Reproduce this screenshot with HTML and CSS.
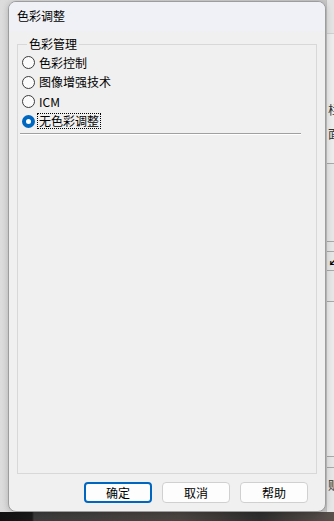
FILE: index.html
```html
<!DOCTYPE html>
<html>
<head>
  <title>色彩调整</title>
  <link rel="stylesheet" href="styles.css">
</head>
<body>

<div class="desk">
  <div class="backwin">
    <div class="bw-head"></div>
    <div class="bw-panel">
      <div class="bw-text bw-t1">栏</div>
      <div class="bw-text">面</div>
    </div>
    <div class="bw-row bw-r1"></div>
    <div class="bw-row bw-r2"></div>
    <div class="bw-row bw-r3"><span class="bw-icon">&#x2199;</span></div>
    <div class="bw-row bw-r4"></div>
    <div class="bw-row bw-r5"></div>
    <div class="bw-row bw-r6"></div>
    <div class="bw-row bw-r7"><span class="bw-text">贩</span></div>
  </div>

  <div class="photo"></div>

  <div class="dialog">
    <div class="titlebar">色彩调整</div>

    <div class="content">
      <fieldset class="group">
        <legend>色彩管理</legend>

        <div class="radio"><span class="dot"></span><span class="label">色彩控制</span></div>
        <div class="radio"><span class="dot"></span><span class="label">图像增强技术</span></div>
        <div class="radio"><span class="dot"></span><span class="label">ICM</span></div>
        <div class="radio checked"><span class="dot"></span><span class="label focus">无色彩调整</span></div>

        <div class="sep"></div>
      </fieldset>

      <div class="buttons">
        <button class="btn default">确定</button>
        <button class="btn">取消</button>
        <button class="btn">帮助</button>
      </div>
    </div>
  </div>
</div>

</body>
</html>
```

FILE: styles.css
```css
body {
  margin: 0;
  font-family: "Noto Sans CJK SC", "Liberation Sans", sans-serif;
  font-size: 12px;
  color: #000;
}

.desk {
  position: relative;
  width: 334px;
  height: 521px;
  overflow: hidden;
  background: linear-gradient(to right, #dcdcdc, #c9c9c9);
}

/* window behind, on the right */
.backwin {
  position: absolute;
  left: 326px;
  top: 0;
  width: 60px;
  height: 513px;
  background: #ebebeb;
  border-left: 1px solid #c4c4c4;
  display: flex;
  flex-direction: column;
}

.bw-head {
  height: 33px;
  background: #e3e3e3;
  border-bottom: 1px solid #cfcfcf;
}

.bw-panel {
  height: 130px;
  padding-top: 68px;
  box-sizing: border-box;
  border-bottom: 1px solid #a8a8a8;
  background: #ececec;
}

.bw-text {
  color: #333;
  line-height: 16px;
  padding-left: 1px;
}

.bw-t1 {
  margin-bottom: 8px;
}

.bw-row {
  border-bottom: 1px solid #a8a8a8;
  background: #e6e6e6;
}

.bw-r1 { height: 77px; }
.bw-r2 { height: 9px; }
.bw-r3 { height: 18px; }
.bw-r4 { height: 30px; }
.bw-r5 { height: 154px; background: #ebebeb; }
.bw-r6 { height: 10px; }
.bw-r7 { flex: 1; border-bottom: none; padding-top: 8px; }

.bw-icon {
  font-size: 11px;
  line-height: 18px;
  padding-left: 1px;
  font-weight: bold;
}

.photo {
  position: absolute;
  left: 0;
  right: 0;
  top: 512px;
  bottom: 0;
  background: linear-gradient(to right, #111 0, #1a1a1a 32px, #3b3b3b 34px, #4a4440 180px, #2e2e2e 260px, #5a514c 334px);
}

/* the dialog */
.dialog {
  position: absolute;
  left: 8px;
  top: 1px;
  width: 318px;
  height: 511px;
  box-sizing: border-box;
  border: 1px solid #9d9d9d;
  border-radius: 8px;
  background: #f0f0f0;
  box-shadow: 0 1px 6px rgba(0, 0, 0, 0.2);
  display: flex;
  flex-direction: column;
  overflow: hidden;
}

.titlebar {
  height: 29px;
  line-height: 27px;
  padding-left: 8px;
  background: #eff1f6;
  font-size: 12px;
}

.content {
  flex: 1;
  display: flex;
  flex-direction: column;
  padding: 0 8px 8px 8px;
}

.group {
  flex: 1;
  margin: 6px 0 0 0;
  padding: 2px 0 0 4px;
  border: 1px solid #d8d8d8;
  min-width: 0;
}

.group legend {
  margin-left: 5px;
  padding: 0 2px;
  line-height: 14px;
  font-size: 12px;
}

.radio {
  display: flex;
  align-items: center;
  height: 19.5px;
}

.dot {
  width: 13px;
  height: 13px;
  box-sizing: border-box;
  border: 1px solid #3b3b3b;
  border-radius: 50%;
  background: #fbfbfb;
  margin-right: 3px;
}

.radio.checked .dot {
  border: 4px solid #0067c0;
  background: #fff;
}

.label {
  line-height: 14px;
  padding: 0 1px;
  border: 1px solid transparent;
  margin-left: -1px;
}

.label.focus {
  border: 1px dotted #000;
}

.sep {
  margin: 2px 15px 0 -2px;
  border-top: 1px solid #a0a0a0;
  border-bottom: 1px solid #fff;
}

.buttons {
  display: flex;
  justify-content: flex-end;
  gap: 10px;
  margin-top: 8px;
  padding-right: 9px;
}

.btn {
  width: 68px;
  height: 21px;
  padding: 0;
  font-family: "Noto Sans CJK SC", sans-serif;
  font-size: 12px;
  line-height: 17px;
  color: #000;
  background: #fdfdfd;
  border: 1px solid #d0d0d0;
  border-radius: 4px;
}

.btn.default {
  border: 2px solid #0067c0;
}
```
